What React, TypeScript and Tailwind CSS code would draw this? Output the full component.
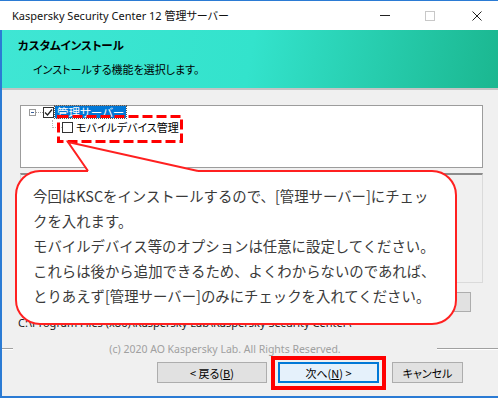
import React from 'react';

// --- Kaspersky installer dialog with tutorial callout ---

const CheckBox = ({ checked }: { checked?: boolean }) => (
  <div className="w-[11px] h-[11px] shrink-0 border border-[#333333] bg-white flex items-center justify-center">
    {checked && (
      <svg width="9" height="9" viewBox="0 0 9 9">
        <path d="M1 4.5 L3.5 7 L8 1.5" fill="none" stroke="#222" strokeWidth="1.3" />
      </svg>
    )}
  </div>
);

export default function App() {
  return (
    <div className="relative w-[498px] h-[398px] overflow-hidden bg-[#f0f0f0] flex flex-col font-['Noto_Sans_CJK_JP','Noto_Sans',sans-serif] [font-feature-settings:'palt'] text-[11px] text-black">
      {/* title bar */}
      <div className="h-[30px] shrink-0 bg-white border-t border-[#2b7bd4] flex items-center">
        <span className="ml-[12px] font-['Noto_Sans','Noto_Sans_CJK_JP',sans-serif] text-[11px] leading-[16px] text-[#111]">
          Kaspersky Security Center 12 管理サーバー
        </span>
        <div className="ml-auto mr-[16px] flex items-center">
          <div className="w-[10px] h-px bg-[#222]" />
          <div className="ml-[35px] w-[10px] h-[10px] border border-[#c8c8c8]" />
          <svg className="ml-[37px]" width="10" height="10" viewBox="0 0 10 10">
            <path d="M0.5 0.5 L9.5 9.5 M9.5 0.5 L0.5 9.5" stroke="#222" strokeWidth="1" />
          </svg>
        </div>
      </div>

      <div className="flex-1 flex flex-col border-l-2 border-b-2 border-[#2b7bd4]">
        {/* header */}
        <div className="h-[60px] shrink-0 border-b-2 border-[#c4c4c4] bg-[linear-gradient(100deg,#3fe6d4_0%,#33e3cc_50%,#1bb790_100%)] pl-[16px] pt-[7px]">
          <div className="font-bold leading-[16px] text-[11.5px]">カスタムインストール</div>
          <div className="mt-[8px] ml-[15px] leading-[16px] text-[11px]">インストールする機能を選択します。</div>
        </div>

        {/* feature tree */}
        <div className="mt-[15px] ml-[18px] w-[463px] h-[63px] shrink-0 border border-[#9c9c9c] bg-white">
          <div className="flex items-center h-[12px] leading-[12px]">
            <div className="ml-[8px] w-[7px] h-[7px] border border-[#9a9a9a] flex items-center justify-center">
              <div className="w-[3px] h-px bg-[#3a5f9a]" />
            </div>
            <div className="w-[7px] border-t border-dotted border-[#a0a0a0]" />
            <CheckBox checked />
            <span className="ml-[1px] px-[2px] h-[12px] bg-[#0078d7] text-white outline-1 outline-dotted outline-[#555] text-[11.5px] leading-[12px]">
              管理サーバー
            </span>
          </div>
          <div className="flex items-center h-[14px] mt-[2px]">
            <div className="ml-[31px] self-start w-[10px] h-[8px] border-l border-b border-dotted border-[#b8b8b8]" />
            <CheckBox />
            <span className="ml-[3px] text-[11px] leading-[14px]">モバイルデバイス管理</span>
          </div>
        </div>

        {/* description panel */}
        <div className="mt-[5px] ml-[18px] w-[463px] h-[110px] shrink-0 border border-[#dadada] border-t-2 border-t-[#8c8c8c]" />

        <div className="mt-[9px] h-[20px] shrink-0 flex">
          <div className="ml-auto mr-[27px] w-[80px] h-[20px] border border-[#adadad] bg-[#e1e1e1] flex items-center justify-center">
            参照(R)...
          </div>
        </div>

        <div className="mt-[4px] ml-[16px] h-[14px] shrink-0 leading-[14px] font-['Noto_Sans',sans-serif] text-[11px] text-[#1a1a1a] whitespace-nowrap">
          {'C:\\Program Files (x86)\\Kaspersky Lab\\Kaspersky Security Center\\'}
        </div>

        {/* copyright over etched line */}
        <div className="mt-[12px] h-[14px] shrink-0 flex items-center">
          <div className="w-[11px] h-[2px] border-t border-[#a0a0a0] border-b border-b-white" />
          <div className="w-[424px] text-center text-[#a0a0a0] leading-[14px] text-[10.5px] font-['Noto_Sans',sans-serif]">
            (c) 2020 AO Kaspersky Lab. All Rights Reserved.
          </div>
          <div className="flex-1 h-[2px] border-t border-[#a0a0a0] border-b border-b-white" />
        </div>

        {/* buttons */}
        <div className="mt-[6px] h-[21px] shrink-0 flex pl-[155px]">
          <div className="w-[110px] h-[21px] border border-[#adadad] bg-[#e1e1e1] flex items-center justify-center leading-[14px]">
            &lt; 戻る(<span className="underline">B</span>)
          </div>
          <div className="ml-[11px] w-[101px] h-[21px] border-2 border-[#0078d7] bg-[#e5f1fb] flex items-center justify-center leading-[14px]">
            次へ(<span className="underline">N</span>) &gt;
          </div>
          <div className="ml-[13px] w-[71px] h-[21px] border border-[#adadad] bg-[#e1e1e1] flex items-center justify-center leading-[14px]">
            キャンセル
          </div>
        </div>
      </div>

      {/* overlays: highlight around next button */}
      <div className="absolute left-[271px] top-[356px] w-[115px] h-[34px] border-4 border-[#ff0000]" />

      {/* speech callout */}
      <div className="absolute left-[15px] top-[170px] w-[442px] h-[155px] rounded-[25px] border-2 border-[#ff2020] bg-white pt-[11px] pl-[16px] [font-feature-settings:normal] text-[14.4px] leading-[25px] text-[#3a3a3a] whitespace-nowrap">
        今回はKSCをインストールするので、[管理サーバー]にチェッ
        <br />
        クを入れます。
        <br />
        モバイルデバイス等のオプションは任意に設定してください。
        <br />
        これらは後から追加できるため、よくわからないのであれば、
        <br />
        とりあえず[管理サーバー]のみにチェックを入れてください。
      </div>

      <svg className="absolute left-0 top-0 pointer-events-none" width="498" height="398" viewBox="0 0 498 398">
        <rect x="58.5" y="116.5" width="123" height="25" fill="none" stroke="#ff0000" strokeWidth="3" strokeDasharray="10 4" />
        <polygon points="68,142 88,170 88,173.5 198,173.5 198,170" fill="#ffffff" />
        <path d="M88 171 L68 142 L198 171" fill="none" stroke="#ff2020" strokeWidth="2" />
      </svg>
    </div>
  );
}
